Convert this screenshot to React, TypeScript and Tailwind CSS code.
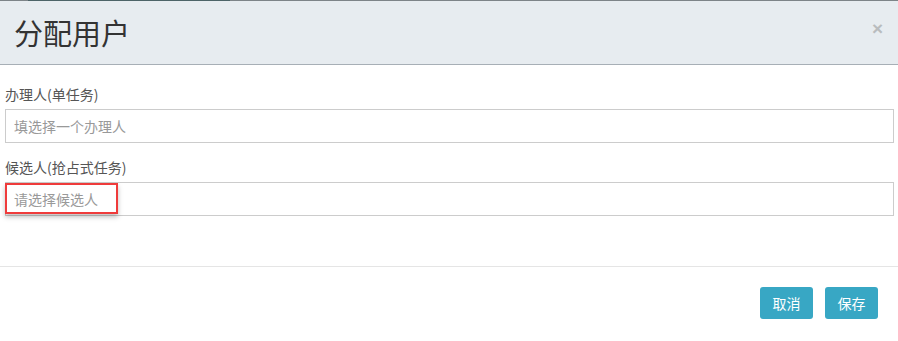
import React from "react";

const font = { fontFamily: '"Noto Sans CJK SC", "Microsoft YaHei", sans-serif' };

function Field({ label, placeholder, highlight }: { label: string; placeholder: string; highlight?: boolean }) {
  return (
    <div className="flex flex-col">
      <label className="text-[14px] leading-[20px] text-[#555]">{label}</label>
      <div className="relative mt-[5px]">
        <input
          className="block h-[34px] w-full border border-[#ccc] bg-white px-[8px] text-[14px] text-[#555] outline-none placeholder:text-[#999]"
          placeholder={placeholder}
          style={font}
        />
        {highlight && (
          <div className="pointer-events-none absolute left-0 top-[1px] h-[31px] w-[113px] border-2 border-[#ef3b3b] shadow-[0_3px_5px_rgba(0,0,0,0.25)]" />
        )}
      </div>
    </div>
  );
}

export default function App() {
  return (
    <div className="h-[341px] w-[898px] overflow-hidden bg-white" style={font}>
      <div className="flex h-px">
        <div className="w-[28px] bg-[#7d8488]" />
        <div className="w-[202px] bg-[#4d6468]" />
        <div className="flex-1 bg-[#7d8488]" />
      </div>
      <div className="flex h-[64px] items-center justify-between border-b border-[#a7afb6] bg-[#e7ecf0] pl-[14px] pr-[15px]">
        <h4 className="text-[29px] leading-none text-[#333]">分配用户</h4>
        <span
          className="-mt-[8px] text-[19px] font-bold leading-none text-[#b9bcbe]"
          style={{ fontFamily: '"Liberation Sans", Arial, sans-serif' }}
        >
          ×
        </span>
      </div>
      <div className="flex flex-col gap-[14px] px-[5px] pb-[50px] pr-[4px] pt-[19px]">
        <Field label="办理人(单任务)" placeholder="填选择一个办理人" />
        <Field label="候选人(抢占式任务)" placeholder="请选择候选人" highlight />
      </div>
      <div className="flex justify-end gap-[12px] border-t border-[#e5e5e5] pr-[20px] pt-[20px]">
        <button className="h-[32px] w-[53px] rounded-[3px] bg-[#38a7c4] text-[14px] text-white">取消</button>
        <button className="h-[32px] w-[53px] rounded-[3px] bg-[#38a7c4] text-[14px] text-white">保存</button>
      </div>
    </div>
  );
}
